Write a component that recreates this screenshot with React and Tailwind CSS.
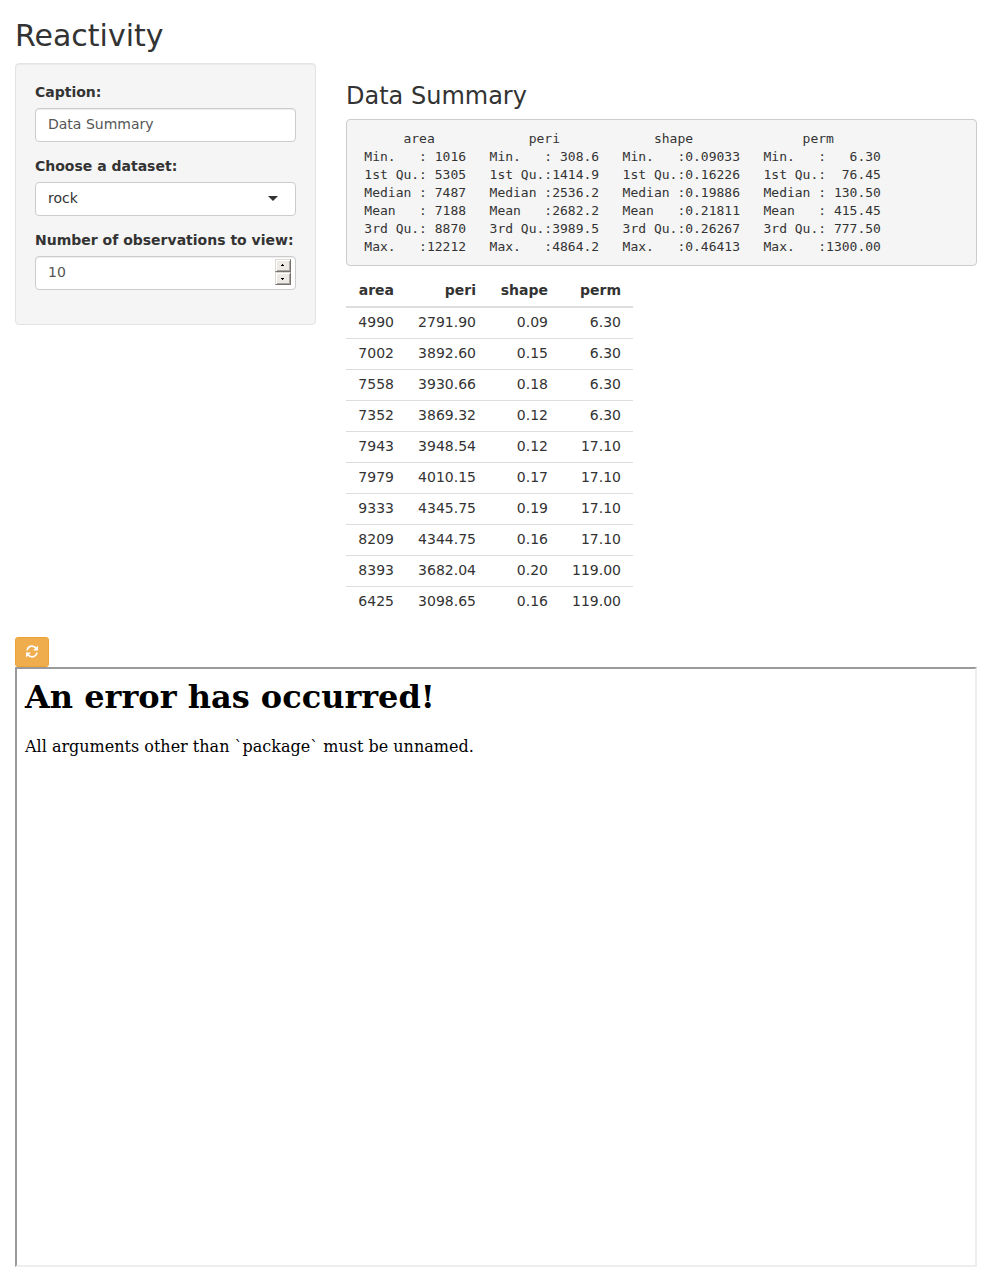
const summary = [
  "      area            peri            shape              perm        ",
  " Min.   : 1016   Min.   : 308.6   Min.   :0.09033   Min.   :   6.30  ",
  " 1st Qu.: 5305   1st Qu.:1414.9   1st Qu.:0.16226   1st Qu.:  76.45  ",
  " Median : 7487   Median :2536.2   Median :0.19886   Median : 130.50  ",
  " Mean   : 7188   Mean   :2682.2   Mean   :0.21811   Mean   : 415.45  ",
  " 3rd Qu.: 8870   3rd Qu.:3989.5   3rd Qu.:0.26267   3rd Qu.: 777.50  ",
  " Max.   :12212   Max.   :4864.2   Max.   :0.46413   Max.   :1300.00  ",
].join("\n");

const rows = [
  ["4990", "2791.90", "0.09", "6.30"],
  ["7002", "3892.60", "0.15", "6.30"],
  ["7558", "3930.66", "0.18", "6.30"],
  ["7352", "3869.32", "0.12", "6.30"],
  ["7943", "3948.54", "0.12", "17.10"],
  ["7979", "4010.15", "0.17", "17.10"],
  ["9333", "4345.75", "0.19", "17.10"],
  ["8209", "4344.75", "0.16", "17.10"],
  ["8393", "3682.04", "0.20", "119.00"],
  ["6425", "3098.65", "0.16", "119.00"],
];

const grid = "grid grid-cols-[60px_82px_72px_73px] text-right";

function Field({ label, children }) {
  return (
    <div className="mb-[15px]">
      <div className="mb-[6px] whitespace-nowrap font-bold leading-[19px]">{label}</div>
      {children}
    </div>
  );
}

function SpinButton({ up }) {
  return (
    <div
      className={`flex h-[13px] w-4 items-start border border-t-[#dcd9d5] border-l-[#dcd9d5] border-r-[#75726e] border-b-[#75726e] bg-[#edeae6] pl-[5px] shadow-[inset_1px_1px_0_#fff,inset_-1px_-1px_0_#aaa7a2] ${up ? "pt-1" : "pt-[5px]"}`}
    >
      <svg width="3" height="2" viewBox="0 0 3 2" shapeRendering="crispEdges">
        <path d={up ? "M1 0h1v1h1v1H0V1h1z" : "M0 0h3v1H2v1H1V1H0z"} fill="#000" />
      </svg>
    </div>
  );
}

export default function App() {
  return (
    <div className="h-[1273px] bg-white px-[15px] pt-[19px] font-['DejaVu_Sans',sans-serif] text-sm leading-5 text-[#333]">
      <h2 className="mb-[11px] text-[30px] leading-[33px]">Reactivity</h2>
      <div className="flex h-[574px] items-start gap-[30px]">
        <div className="h-[262px] w-[301px] shrink-0 rounded border border-[#e3e3e3] bg-[#f5f5f5] p-[19px] shadow-[inset_0_1px_1px_rgba(0,0,0,0.05)]">
          <Field label="Caption:">
            <div className="h-[34px] rounded border border-[#ccc] bg-white px-3 py-[5px] text-[#555] shadow-[inset_0_1px_1px_rgba(0,0,0,0.075)]">
              Data Summary
            </div>
          </Field>
          <Field label="Choose a dataset:">
            <div className="flex h-[34px] items-center justify-between rounded border border-[#ccc] bg-white pb-[2px] pl-3 pr-[17px]">
              <span>rock</span>
              <span className="border-x-[5px] border-t-[5px] border-x-transparent border-t-[#333]" />
            </div>
          </Field>
          <Field label="Number of observations to view:">
            <div className="flex h-[34px] items-start justify-between rounded border border-[#ccc] bg-white pl-3 pr-1 shadow-[inset_0_1px_1px_rgba(0,0,0,0.075)]">
              <span className="pt-[5px] text-[#555]">10</span>
              <div className="pt-[2px]">
                <SpinButton up />
                <SpinButton />
              </div>
            </div>
          </Field>
        </div>
        <div className="min-w-0 flex-1 pt-5">
          <h3 className="mb-[10px] text-2xl leading-[26px]">Data Summary</h3>
          <pre className="mb-[10px] rounded border border-[#ccc] bg-[#f5f5f5] p-[9.5px] font-['DejaVu_Sans_Mono',monospace] text-[13px] leading-[18px]">{summary}</pre>
          <div className="w-[287px]">
            <div className={`${grid} h-8 border-b-2 border-[#ddd] pt-1 font-bold`}>
              {["area", "peri", "shape", "perm"].map((h) => (
                <div key={h} className="pr-3">{h}</div>
              ))}
            </div>
            {rows.map((r, i) => (
              <div key={i} className={`${grid} ${i ? "h-[31px] border-t border-[#ddd] pt-1" : "h-[30px] pt-1"}`}>
                {r.map((c, j) => (
                  <div key={j} className="pr-3">{c}</div>
                ))}
              </div>
            ))}
          </div>
        </div>
      </div>
      <button className="flex h-[30px] w-[34px] items-center justify-center rounded-[3px] border border-[#eea236] bg-[#f0ad4e] pb-px text-white">
        <svg width="12" height="13" viewBox="0 0 12 13" fill="none">
          <path d="M1 5.400C1.700 2.800 3.700 1.200 6 1.200c1.700 0 3.200.8 4.200 2.200M11 7.600c-.7 2.600-2.700 4.200-5 4.200-1.700 0-3.200-.8-4.200-2.200" stroke="currentColor" strokeWidth="1.700" />
          <path d="M12 .4v5H7zM0 12.600v-5h5z" fill="currentColor" />
        </svg>
      </button>
      <section className="h-[600px] border-2 border-t-[#9a9a9a] border-r-[#eee] border-b-[#eee] border-l-[#9a9a9a] px-2 pb-2 pt-[9px] font-['DejaVu_Serif',serif] text-base leading-[19px] text-black">
        <h1 className="mb-[21px] text-[32px] font-bold leading-[38px]">An error has occurred!</h1>
        <p>All arguments other than `package` must be unnamed.</p>
      </section>
    </div>
  );
}
